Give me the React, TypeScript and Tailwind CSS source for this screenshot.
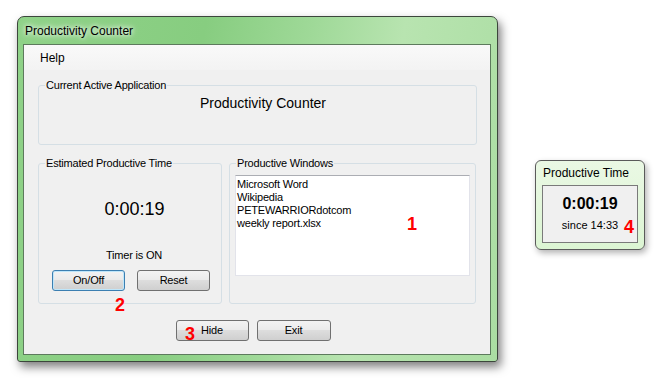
import React from "react";

const btnBase =
  "h-[21px] w-[73px] rounded-[3px] border text-[11px] tracking-[-0.2px] text-black flex items-center justify-center bg-[linear-gradient(to_bottom,#f3f3f3_0%,#ebebeb_45%,#dddddd_50%,#cfcfcf_100%)]";

function Group({
  title,
  className,
  children,
}: {
  title: string;
  className?: string;
  children?: React.ReactNode;
}) {
  return (
    <div className={"relative rounded-[3px] border border-[#d5dfe5] " + (className || "")}>
      <span className="absolute -top-[7px] left-[6px] bg-[#f0f0f0] px-[1px] text-[11px] leading-[13px] tracking-[-0.2px] text-black">
        {title}
      </span>
      {children}
    </div>
  );
}

export default function App() {
  return (
    <div className="relative h-[378px] w-[661px] overflow-hidden bg-white font-['Liberation_Sans',Arial,sans-serif] text-black">
      {/* Main window */}
      <div className="absolute left-[17px] top-[16px] flex h-[346px] w-[481px] flex-col rounded-t-[7px] rounded-b-[3px] border border-[#3c463c] bg-[linear-gradient(100deg,#8fd288_0%,#87cd80_35%,#9fd998_55%,#b8e4b0_72%,#aadda2_100%)] shadow-[3px_5px_10px_rgba(0,0,0,0.5)]">
        <div className="flex h-[27px] items-center pl-[7px] pt-[1px] text-[12px] [text-shadow:0_0_8px_#fff,0_0_4px_#fff]">
          Productivity Counter
        </div>
        <div className="mb-[6px] ml-[5px] mr-[6px] flex flex-1 flex-col border border-[#5d7a5d] bg-[#f0f0f0]">
          {/* menu bar */}
          <div className="flex h-[25px] items-center bg-[linear-gradient(to_bottom,#f9f9f9,#f3f3f3)] pl-[16px] text-[12px]">
            Help
          </div>
          <div className="flex flex-col pl-[14px] pr-[13px] pt-[15px]">
            <Group title="Current Active Application" className="h-[60px]">
              <div className="pl-[11px] pt-[9px] text-center text-[14px] leading-[16px]">
                Productivity Counter
              </div>
            </Group>
            <div className="mt-[18px] flex h-[141px] gap-[7px] pr-[1px]">
              <Group title="Estimated Productive Time" className="flex w-[184px] flex-col items-center">
                <div className="pl-[9px] pt-[35px] text-[18px] leading-[20px]">0:00:19</div>
                <div className="mt-[30px] pl-[8px] text-[11px] leading-[13px] tracking-[-0.2px]">Timer is ON</div>
                <div className="mt-[8px] flex gap-[12px] pl-[2px]">
                  <div className={btnBase + " border-[#3c7fb1] shadow-[inset_0_0_0_1px_#bfe6fa]"}>On/Off</div>
                  <div className={btnBase + " border-[#707070]"}>Reset</div>
                </div>
              </Group>
              <Group title="Productive Windows" className="flex-1">
                <div className="mx-[5px] mt-[11px] h-[101px] border border-[#e2e3ea] border-t-[#abadb3] bg-white pl-[1px] pt-[2px] text-[11px] leading-[13px] tracking-[-0.2px]">
                  <div>Microsoft Word</div>
                  <div>Wikipedia</div>
                  <div>PETEWARRIORdotcom</div>
                  <div>weekly report.xlsx</div>
                </div>
              </Group>
            </div>
            <div className="mt-[16px] flex justify-center gap-[8px] pr-[9px]">
              <div className={btnBase + " border-[#707070]"}>Hide</div>
              <div className={btnBase + " w-[74px] border-[#707070]"}>Exit</div>
            </div>
          </div>
        </div>
      </div>

      {/* Small floating window */}
      <div className="absolute left-[535px] top-[160px] flex h-[90px] w-[110px] flex-col rounded-[6px] border border-[#5a5a5a] bg-[linear-gradient(to_bottom,#eaf8e4,#dcf5d3)] shadow-[2px_3px_6px_rgba(0,0,0,0.3)]">
        <div className="pl-[7px] pt-[4px] text-[12px] leading-[16px]">Productive Time</div>
        <div className="ml-[6px] mt-[4px] flex h-[58px] w-[96px] flex-col items-center border border-[#7a7a7a] bg-[#f0f0f0]">
          <div className="pt-[9px] text-[16px] font-bold leading-[18px]">0:00:19</div>
          <div className="mt-[6px] text-[11px] leading-[13px]">since 14:33</div>
        </div>
      </div>

      {/* Red annotations */}
      <span className="absolute left-[407px] top-[215px] text-[18px] font-bold leading-[18px] text-[#ff0000]">1</span>
      <span className="absolute left-[115px] top-[296px] text-[18px] font-bold leading-[18px] text-[#ff0000]">2</span>
      <span className="absolute left-[185px] top-[325px] text-[18px] font-bold leading-[18px] text-[#ff0000]">3</span>
      <span className="absolute left-[624px] top-[218px] text-[18px] font-bold leading-[18px] text-[#ff0000]">4</span>
    </div>
  );
}
